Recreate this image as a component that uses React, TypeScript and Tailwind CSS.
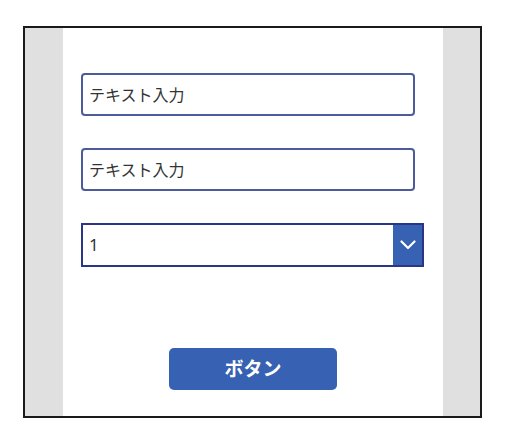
import React from "react";

export default function App() {
  return (
    <div className="w-[505px] h-[438px] bg-white pl-[23px] pt-[26px]" style={{ fontFamily: '"Noto Sans", "Noto Sans CJK JP", sans-serif' }}>
      <div className="w-[459px] h-[392px] border-[2px] border-[#1a1a1a] flex">
        <div className="w-[38px] bg-[#e0e0e0]" />
        <div className="flex-1 bg-white flex flex-col pt-[45px] pl-[18px]">
          <div className="w-[334px] h-[43px] border-[2px] border-[#4b5b9c] rounded-[4px] flex items-center pl-[6px] text-[16px] text-[#333]">
            テキスト入力
          </div>
          <div className="mt-[32px] w-[334px] h-[43px] border-[2px] border-[#4b5b9c] rounded-[4px] flex items-center pl-[6px] text-[16px] text-[#333]">
            テキスト入力
          </div>
          <div className="mt-[32px] w-[343px] h-[44px] border-[2px] border-[#2a3585] flex">
            <div className="flex-1 flex items-center pl-[6px] text-[17px] text-[#333]">1</div>
            <div className="w-[29px] bg-[#3761b2] flex items-center justify-center">
              <svg width="16" height="10" viewBox="0 0 16 10" fill="none">
                <path d="M1.5 1.5 L8 8 L14.5 1.5" stroke="white" strokeWidth="2.2" strokeLinecap="round" strokeLinejoin="round" />
              </svg>
            </div>
          </div>
          <div className="mt-[81px] ml-[88px] w-[168px] h-[42px] rounded-[5px] bg-[#3761b2] flex items-center justify-center text-white font-bold text-[19px]">
            ボタン
          </div>
        </div>
        <div className="w-[37px] bg-[#e0e0e0]" />
      </div>
    </div>
  );
}
